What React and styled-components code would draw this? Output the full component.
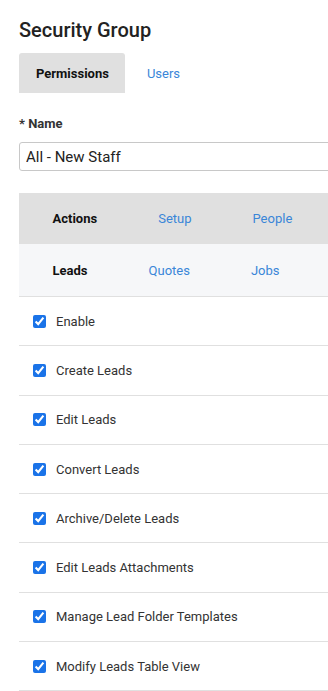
import React from "react";
import styled, { createGlobalStyle } from "styled-components";

const GlobalStyle = createGlobalStyle`
  body {
    margin: 0;
    background: #fff;
    font-family: Roboto, "Liberation Sans", Arial, sans-serif;
    overflow: hidden;
  }
`;

const permissions = [
  "Enable",
  "Create Leads",
  "Edit Leads",
  "Convert Leads",
  "Archive/Delete Leads",
  "Edit Leads Attachments",
  "Manage Lead Folder Templates",
  "Modify Leads Table View",
];

const App = () => {
  return (
    <Page>
      <GlobalStyle />
      <Title>Security Group</Title>
      <TabBar>
        <Tab active>Permissions</Tab>
        <Tab>Users</Tab>
      </TabBar>

      <Label>* Name</Label>
      <Input defaultValue="All - New Staff" />

      <SubNav tone="#e0e0e0">
        <SubTab active>Actions</SubTab>
        <SubTab>Setup</SubTab>
        <SubTab>People</SubTab>
      </SubNav>
      <SubNav tone="#f6f7f9" bordered>
        <SubTab active>Leads</SubTab>
        <SubTab>Quotes</SubTab>
        <SubTab>Jobs</SubTab>
      </SubNav>

      <List>
        {permissions.map((p) => (
          <Row key={p}>
            <Check type="checkbox" defaultChecked />
            <span>{p}</span>
          </Row>
        ))}
      </List>
    </Page>
  );
};

export default App;

const Page = styled.div`
  width: 340px;
  padding: 18px 0 0 19px;
`;

const Title = styled.h1`
  margin: 0;
  font-size: 20px;
  font-weight: 500;
  color: #222;
  line-height: 24px;
`;

const TabBar = styled.div`
  display: flex;
  margin-top: 11px;
  height: 40px;
`;

const Tab = styled.div`
  display: flex;
  align-items: center;
  padding: ${(p) => (p.active ? "0 16px 0 17px" : "0 22px")};
  font-size: 13px;
  font-weight: ${(p) => (p.active ? 700 : 400)};
  color: ${(p) => (p.active ? "#111" : "#3a86d8")};
  background: ${(p) => (p.active ? "#e0e0e0" : "transparent")};
  border-radius: 3px 3px 0 0;
`;

const Label = styled.div`
  margin-top: 23px;
  font-size: 13px;
  font-weight: 700;
  color: #333;
  line-height: 16px;
`;

const Input = styled.input`
  display: block;
  box-sizing: border-box;
  width: 100%;
  margin-top: 10px;
  height: 29px;
  padding: 0 6px;
  border: 1px solid #c8c8c8;
  border-radius: 3px;
  font-family: Roboto, "Liberation Sans", Arial, sans-serif;
  font-size: 15px;
  color: #222;
  outline: none;
`;

const SubNav = styled.div`
  display: flex;
  align-items: center;
  height: ${(p) => (p.bordered ? "52px" : "51px")};
  margin-top: ${(p) => (p.bordered ? "0" : "22px")};
  padding-left: 3px;
  background: ${(p) => p.tone};
  border-bottom: ${(p) => (p.bordered ? "1px solid #e0e0e0" : "none")};
`;

const SubTab = styled.div`
  padding: 0 30.5px;
  font-size: 13px;
  font-weight: ${(p) => (p.active ? 700 : 400)};
  color: ${(p) => (p.active ? "#111" : "#3a86d8")};
`;

const List = styled.div`
  display: flex;
  flex-direction: column;
`;

const Row = styled.label`
  display: flex;
  align-items: center;
  gap: 10px;
  height: 48.3px;
  padding-left: 14px;
  border-bottom: 1px solid #e0e0e0;
  font-size: 13px;
  color: #333;
`;

const Check = styled.input`
  width: 13px;
  height: 13px;
  margin: 0;
  accent-color: #1a73e8;
`;
